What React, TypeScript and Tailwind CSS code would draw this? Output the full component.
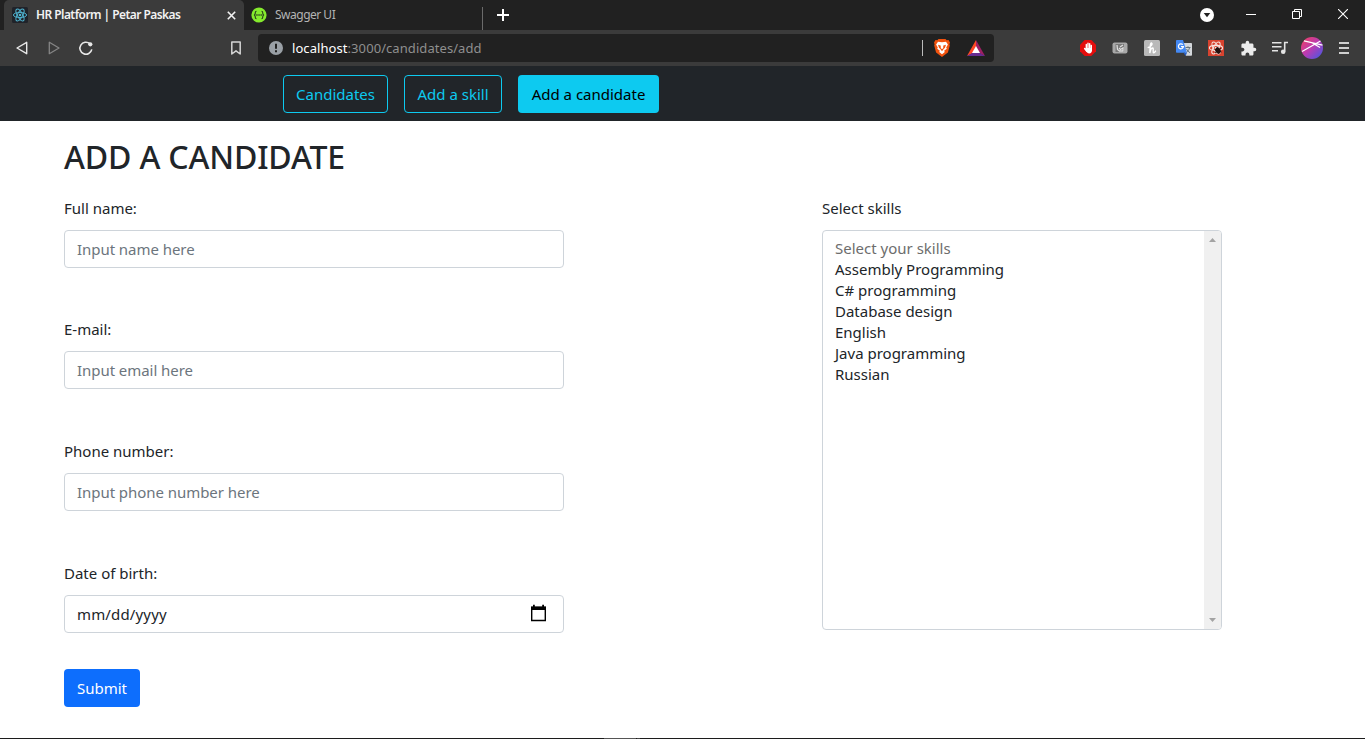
import type { ReactNode } from 'react';

const ATOM_ROTATIONS = [0, 60, 120];

function Atom({ color, width = 1.1 }: { color: string; width?: number }) {
  return (
    <g fill="none" stroke={color} strokeWidth={width}>
      {ATOM_ROTATIONS.map((angle) => (
        <ellipse key={angle} cx="8" cy="8" rx="6.6" ry="2.6" transform={`rotate(${angle} 8 8)`} />
      ))}
      <circle cx="8" cy="8" r="1.3" fill={color} stroke="none" />
    </g>
  );
}

function TabBar() {
  return (
    <div className="flex h-[30px] items-stretch bg-[#212121] pl-1">
      <div className="flex w-60 items-center rounded-t-[5px] bg-[#3b3b3b] pl-2">
        <svg className="size-4 shrink-0" viewBox="0 0 16 16">
          <rect width="16" height="16" rx="1.5" fill="#20232a" />
          <Atom color="#4fb3cf" width={1} />
        </svg>
        <span className="ml-2 w-[191px] text-[12px] font-semibold tracking-[-0.56px] whitespace-nowrap text-[#f2f2f2]">
          HR Platform | Petar Paskas
        </span>
        <svg className="size-[9px] shrink-0" viewBox="0 0 9 9" stroke="#f2f2f2" strokeWidth="1.6">
          <path d="M.8.8l7.4 7.4M8.200.8L.8 8.200" />
        </svg>
      </div>
      <div className="flex w-[239px] items-center pl-[7px]">
        <svg className="size-4 shrink-0" viewBox="0 0 16 16">
          <circle cx="8" cy="8" r="7.6" fill="#85ea2d" />
          <g fill="none" stroke="#263a1c" strokeWidth="1.1">
            <path d="M5.500 4.200C4 4.200 4.300 5.500 4.200 6.600 4.100 7.600 3.700 8 2.900 8c.8 0 1.200.4 1.300 1.400.1 1.100-.2 2.400 1.300 2.400M10.500 4.200c1.500 0 1.200 1.300 1.300 2.400.1 1 .5 1.400 1.300 1.400-.8 0-1.200.4-1.300 1.400-.1 1.100.2 2.400-1.300 2.400" />
            <path d="M5.300 8h1.300M7.400 8h1.300M9.500 8h1.300" strokeWidth="1.300" />
          </g>
        </svg>
        <span className="ml-2 text-[12px] tracking-[-0.5px] whitespace-nowrap text-[#b4b4b4]">Swagger UI</span>
        <span className="mt-[7px] ml-auto h-[23px] w-px bg-[#6b6b6b]" />
      </div>
      <svg className="mt-[9px] ml-[14px] size-3" viewBox="0 0 12 12" stroke="#fff" strokeWidth="2">
        <path d="M6 0v12M0 6h12" />
      </svg>
      <div className="ml-auto flex items-center">
        <svg className="mr-[32px] size-[14px]" viewBox="0 0 14 14">
          <circle cx="7" cy="7" r="7" fill="#fff" />
          <path d="M3.700 5h6.600L7 9.300z" fill="#212121" />
        </svg>
        <svg className="mr-[36px] h-[11px] w-[10px]" viewBox="0 0 10 11" stroke="#fff">
          <path d="M0 4.500h10" />
        </svg>
        <svg className="mr-[36px] mb-[2px] size-[10px]" viewBox="0 0 10 10" fill="none" stroke="#fff">
          <path d="M.5 2.500h7v7h-7zM2.500 2.500v-2h7v7h-2" />
        </svg>
        <svg className="mr-[17px] mb-[2px] size-[10px]" viewBox="0 0 10 10" stroke="#fff" strokeWidth="1.1">
          <path d="M0 0l10 10M10 0L0 10" />
        </svg>
      </div>
    </div>
  );
}

function Cell({ children }: { children: ReactNode }) {
  return <span className="flex w-8 items-center justify-center">{children}</span>;
}

function Toolbar() {
  return (
    <div className="flex h-9 items-center bg-[#3b3b3b] pl-1.5">
      <Cell>
        <svg className="size-4" viewBox="0 0 16 16" fill="none" stroke="#e8e8e8" strokeWidth="1.4" strokeLinejoin="round">
          <path d="M12.700 2.300v11.400L3 8z" />
        </svg>
      </Cell>
      <Cell>
        <svg className="size-4" viewBox="0 0 16 16" fill="none" stroke="#858585" strokeWidth="1.3" strokeLinejoin="round">
          <path d="M3.300 2.300v11.400L13 8z" />
        </svg>
      </Cell>
      <Cell>
        <svg className="size-4" viewBox="0 0 16 16" fill="none" stroke="#e8e8e8" strokeWidth="1.600">
          <path d="M11.900 3.700A6 6 0 1 0 13.800 9.400" />
          <circle cx="12.300" cy="4.300" r="2.100" fill="#e8e8e8" stroke="none" />
        </svg>
      </Cell>
      <svg className="ml-[126px] size-4" viewBox="0 0 16 16" fill="none" stroke="#d5d5d5" strokeWidth="1.5" strokeLinejoin="round">
        <path d="M3.800 2h8.400v12L8 10.800 3.800 14z" />
      </svg>
      <div className="ml-[14px] flex h-7 w-[736px] items-center rounded-[4px] bg-[#212121] pl-[11px]">
        <svg className="size-[14px]" viewBox="0 0 14 14">
          <circle cx="7" cy="7" r="7" fill="#9aa0a6" />
          <path d="M7 2.700v5M7 9.200v2" stroke="#212121" strokeWidth="2" />
        </svg>
        <span className="ml-[9px] pt-px text-[13px] tracking-[0.07px] whitespace-nowrap text-[#8f8f8f]">
          <span className="text-white">localhost</span>:3000/candidates/add
        </span>
        <span className="mr-[11px] ml-auto h-4 w-px bg-[#bcbcbc]" />
        <svg className="mr-[17px] h-[18px] w-4" viewBox="0 0 16 18">
          <path d="M4.500 0h7l1.200 1.300 1.800-.2L16 3.400l-.6 1.800.4 1.200-1.900 7.200L8 18l-5.900-4.400L.2 6.400l.4-1.200L0 3.400l1.500-2.300 1.800.2z" fill="#f1520e" />
          <path d="M8 3.300l4-.5 1.900 2.600-1.700 3 .6 1.400-2.700 1.900.7 1.300L8 15.200 5.200 13l.7-1.300-2.700-1.900.6-1.400-1.700-3L4 2.800z" fill="#fff" />
          <path d="M4 5.700l2.700.8.1 2.700L8 10l1.200-.8.1-2.700 2.700-.8-1 3-1.500 1.600L8 12.200l-1.500-1.900L5 8.700z" fill="#f1520e" />
          <path d="M7.300 4.500h1.400l-.2 4.700H7.500z" fill="#fff" />
        </svg>
        <svg className="mr-[9px] h-4 w-[18px]" viewBox="0 0 18 16">
          <path d="M9 0L0 16l6-3 3-6z" fill="#ff4724" />
          <path d="M9 0l9 16-6-3-3-6z" fill="#9e1f63" />
          <path d="M0 16h18l-6-3.500H6z" fill="#662d91" />
          <path d="M9 6l4 7H5z" fill="#fff" />
        </svg>
      </div>
      <div className="ml-auto mr-[5px] flex">
        <Cell>
          <svg className="size-4" viewBox="0 0 16 16">
            <path d="M4.700 0h6.600L16 4.700v6.600L11.300 16H4.700L0 11.300V4.700z" fill="#e40d0d" />
            <g stroke="#fff" strokeWidth="1.400" strokeLinecap="round">
              <path d="M6.300 4.500v5M8 3.300v5M9.700 3.800v5M11.300 5.500v4M4.600 8.500l2 2.700" />
            </g>
            <path d="M5.800 8h6.200v2.300c0 2-1 3.200-2.800 3.200-1.600 0-2.200-.8-3.400-2.700z" fill="#fff" />
          </svg>
        </Cell>
        <Cell>
          <svg className="size-4" viewBox="0 0 16 16">
            <rect x=".5" y="2.500" width="15" height="11" rx="2" fill="#a8a8a8" />
            <rect x="3.500" y="4" width="8.500" height="8" fill="#777" />
            <path d="M5 5l.5 4.500L7.500 11H11V8L8.500 9.500 7 8M8 7l3-2" fill="none" stroke="#dedede" strokeWidth="1.300" />
          </svg>
        </Cell>
        <Cell>
          <svg className="size-4" viewBox="0 0 16 16">
            <rect width="16" height="16" rx="1.500" fill="#b9b9b9" />
            <path d="M4.200 7.500C7 7 9 3.800 7.600 3 6 2.500 6.200 8 5.800 13c.6-3 1.500-5 2.800-5 1.500 0-.2 4.500 1 4.700.8 0 1.400-.7 1.900-1.600" fill="none" stroke="#fff" strokeWidth="1.400" strokeLinecap="round" />
          </svg>
        </Cell>
        <Cell>
          <svg className="size-4" viewBox="0 0 16 16">
            <path d="M7 3h8.200q.8 0 .8.800V15q0 .8-.8.8H10z" fill="#d5d8dc" />
            <path d="M9.500 7.500h5M12 6.300v1.200M13.600 7.500c-.6 2.500-1.700 4-3.300 5M10.500 9c.8 1.700 1.900 2.900 3.500 3.700" fill="none" stroke="#66747c" strokeWidth="1" />
            <path d="M.8 0H7l4 12.700H.8Q0 12.700 0 12V.8Q0 0 .8 0z" fill="#4489f4" />
            <path d="M7.500 12.700H11L9.600 16z" fill="#2b5fc1" />
            <path d="M6.800 4.700A2.500 2.500 0 1 0 7.400 6.700H5" fill="none" stroke="#fff" strokeWidth="1.200" />
          </svg>
        </Cell>
        <Cell>
          <svg className="size-4" viewBox="0 0 16 16">
            <rect width="16" height="16" fill="#d8432f" />
            <Atom color="#f7e3df" />
            <ellipse cx="10" cy="10.500" rx="2.600" ry="3.200" transform="rotate(-35 10 10.500)" fill="#24110f" />
            <path d="M6.500 9.500l7 2.500M7 13l6-5M9 7l2 7" stroke="#24110f" strokeWidth=".9" />
          </svg>
        </Cell>
        <Cell>
          <svg className="size-[17px]" viewBox="0 0 24 24" fill="#ececec">
            <path d="M20.500 11H19V7c0-1.100-.9-2-2-2h-4V3.500a2.500 2.500 0 0 0-5 0V5H4c-1.100 0-1.990.9-1.990 2v3.800H3.500c1.490 0 2.700 1.210 2.700 2.700s-1.210 2.700-2.700 2.700H2V20c0 1.100.9 2 2 2h3.800v-1.500c0-1.490 1.210-2.700 2.700-2.700 1.490 0 2.700 1.210 2.700 2.700V22H17c1.100 0 2-.9 2-2v-4h1.500a2.500 2.500 0 0 0 0-5z" />
          </svg>
        </Cell>
        <Cell>
          <svg className="size-4" viewBox="0 0 16 16">
            <path d="M0 2.700h9.500M0 6.700h9.500M0 10.700h6" stroke="#e4e4e4" strokeWidth="1.600" />
            <path d="M12.700 11.500V2.500H16" fill="none" stroke="#e4e4e4" strokeWidth="1.600" />
            <circle cx="11.200" cy="11.800" r="2.300" fill="#e4e4e4" />
          </svg>
        </Cell>
        <Cell>
          <svg className="size-[22px]" viewBox="0 0 22 22">
            <defs>
              <linearGradient id="avatar" x1="0" y1="0" x2="1" y2="1">
                <stop offset="0" stopColor="#f5405c" />
                <stop offset=".5" stopColor="#b83bb4" />
                <stop offset="1" stopColor="#3a5be8" />
              </linearGradient>
            </defs>
            <circle cx="11" cy="11" r="11" fill="url(#avatar)" />
            <path d="M3 3.800L21.500 8.200M1 14.500L19.500 4M11 5.800L19 10.500" stroke="#fff" strokeWidth="1.200" />
          </svg>
        </Cell>
        <Cell>
          <svg className="h-3 w-[10px]" viewBox="0 0 10 12" stroke="#d0d0d0" strokeWidth="1.800">
            <path d="M0 1h10M0 6h10M0 11h10" />
          </svg>
        </Cell>
      </div>
    </div>
  );
}

function Field({ label, height, children }: { label: string; height: string; children: ReactNode }) {
  return (
    <div className={height}>
      <label className="block h-6 text-[15px] leading-6">{label}</label>
      <div className="mt-2.5 flex h-[38px] items-center rounded-[4px] border border-[#ced4da] pr-4 pl-3 leading-6">
        {children}
      </div>
    </div>
  );
}

const SKILLS = ['Assembly Programming', 'C# programming', 'Database design', 'English', 'Java programming', 'Russian'];

export default function App() {
  return (
    <div className="flex h-[739px] w-[1365px] flex-col overflow-hidden bg-white font-['Noto_Sans','Open_Sans',sans-serif] text-[15px] text-[#212529]">
      <TabBar />
      <Toolbar />
      <nav className="flex h-[55px] shrink-0 items-center gap-4 bg-[#212529] pl-[283px] text-[#0dcaf0]">
        <a className="flex h-[38px] w-[105px] items-center justify-center rounded-[4px] border border-[#0dcaf0] pt-0.5 whitespace-nowrap">Candidates</a>
        <a className="flex h-[38px] w-[98px] items-center justify-center rounded-[4px] border border-[#0dcaf0] pt-0.5 whitespace-nowrap">Add a skill</a>
        <a className="flex h-[38px] w-[141px] items-center justify-center rounded-[4px] bg-[#0dcaf0] pt-0.5 whitespace-nowrap text-black">Add a candidate</a>
      </nav>
      <main className="flex-1 px-16 pt-4">
        <h1 className="h-[59px] text-[32px] leading-[40px] font-medium tracking-[-0.17px]">ADD A CANDIDATE</h1>
        <div className="flex">
          <form className="w-[500px]">
            <Field label="Full name:" height="h-[121px]">
              <span className="tracking-[-0.05px] text-[#6c757d]">Input name here</span>
            </Field>
            <Field label="E-mail:" height="h-[122px]">
              <span className="tracking-[-0.05px] text-[#6c757d]">Input email here</span>
            </Field>
            <Field label="Phone number:" height="h-[122px]">
              <span className="tracking-[-0.05px] text-[#6c757d]">Input phone number here</span>
            </Field>
            <Field label="Date of birth:" height="h-[108px]">
              <span className="tracking-[0.15px]">mm/dd/yyyy</span>
              <svg className="mb-0.5 ml-auto h-[18px] w-[17px]" viewBox="0 0 17 18">
                <path d="M1.700 3.500h13.600v13H1.700z" fill="none" stroke="#000" strokeWidth="1.400" />
                <path d="M1 2.500h15V6H1zM3 .8h1.800v2H3zM12.200.8H14v2h-1.800z" />
              </svg>
            </Field>
            <button type="button" className="flex h-[38px] w-[76px] items-center justify-center rounded-[4px] bg-[#0d6efd] text-white">
              Submit
            </button>
          </form>
          <section className="ml-[258px] w-[400px]">
            <label className="block h-6 leading-6">Select skills</label>
            <div className="mt-2.5 flex h-[400px] overflow-hidden rounded-[4px] border border-[#ced4da]">
              <ul className="flex-1 py-[7px] pl-3 leading-[21px]">
                <li className="text-[#6d6d6d]">Select your skills</li>
                {SKILLS.map((skill) => (
                  <li key={skill}>{skill}</li>
                ))}
              </ul>
              <div className="flex w-[17px] flex-col items-center justify-between bg-[#f0f0f0] pt-[7px] pb-[7px]">
                <svg className="h-[4px] w-[7px]" viewBox="0 0 7 4" fill="#a3a3a3"><path d="M0 4l3.500-4L7 4z" /></svg>
                <svg className="h-[4px] w-[7px]" viewBox="0 0 7 4" fill="#a3a3a3"><path d="M0 0l3.500 4L7 0z" /></svg>
              </div>
            </div>
          </section>
        </div>
      </main>
      <footer className="flex h-px shrink-0 bg-[#1c1c1c] pl-[604px]">
        <span className="w-8 bg-[#555]" />
        <span className="ml-px w-[3px] bg-[#444]" />
      </footer>
    </div>
  );
}
